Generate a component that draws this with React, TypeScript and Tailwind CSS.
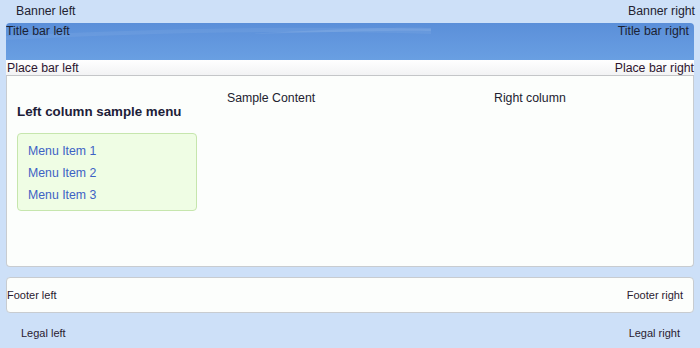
import React from "react";

export default function App() {
  return (
    <div className="w-[700px] h-[348px] bg-[#cde0f8] font-['Liberation_Sans',Arial,sans-serif] text-[12.3px] text-[#222230] flex flex-col overflow-hidden">
      {/* Banner */}
      <div className="h-[23px] flex justify-between pl-[16px] pr-[5px] pt-[4px] leading-[14px]">
        <span>Banner left</span>
        <span>Banner right</span>
      </div>

      <div className="mx-[6px] flex flex-col">
        {/* Title bar */}
        <div className="relative h-[37px] rounded-t-[4px] bg-gradient-to-b from-[#5b8fd9] via-[#6297de] to-[#699fe2] overflow-hidden">
          <svg className="absolute inset-0" width="688" height="37" viewBox="0 0 688 37" preserveAspectRatio="none">
            <path d="M0 13 C 150 5, 300 3, 425 6 L 425 11 C 300 7, 150 9, 0 17 Z" fill="#ffffff" opacity="0.06" />
            <path d="M240 11 C 330 6, 390 4, 425 5 L 425 8 C 390 7, 330 9, 240 11 Z" fill="#ffffff" opacity="0.09" />
          </svg>
          <div className="relative flex justify-between pt-[1px] pr-[5px] leading-[14px] text-[#1c2233]">
            <span>Title bar left</span>
            <span>Title bar right</span>
          </div>
        </div>

        {/* Place bar */}
        <div className="h-[16px] border-b border-[#c4c6c8] bg-gradient-to-b from-[#ffffff] to-[#f2f3f4] flex justify-between pl-[1px] pt-[1px] leading-[14px] text-[#2e1630]">
          <span>Place bar left</span>
          <span>Place bar right</span>
        </div>

        {/* Content panel */}
        <div className="h-[191px] bg-[#fcfefc] border-x border-b border-[#c8ccd0] rounded-b-[4px] flex pl-[10px] pt-[15px]">
          <div className="w-[200px] pt-[13px]">
            <div className="font-bold text-[13.33px] leading-[16px] text-[#1c2038]">Left column sample menu</div>
            <div className="mt-[13px] w-[180px] h-[78px] border border-[#c6e6ad] bg-[#effde4] rounded-[4px] pt-[6px] px-[10px] flex flex-col leading-[22px] text-[#3d62c4]">
              <span>Menu Item 1</span>
              <span>Menu Item 2</span>
              <span>Menu Item 3</span>
            </div>
          </div>
          <div className="w-[277px] pl-[10px] leading-[14px]">Sample Content</div>
          <div className="leading-[14px]">Right column</div>
        </div>

        {/* Footer */}
        <div className="mt-[10px] h-[36px] bg-[#fcfefc] border border-[#c8ccd0] rounded-[4px] flex justify-between pt-[11px] pr-[10px] text-[11px] leading-[13px] text-[#2a2030]">
          <span>Footer left</span>
          <span>Footer right</span>
        </div>
      </div>

      {/* Legal */}
      <div className="mt-[14px] flex justify-between pl-[21px] pr-[20px] text-[11px] leading-[13px] text-[#2a2030]">
        <span>Legal left</span>
        <span>Legal right</span>
      </div>
    </div>
  );
}
